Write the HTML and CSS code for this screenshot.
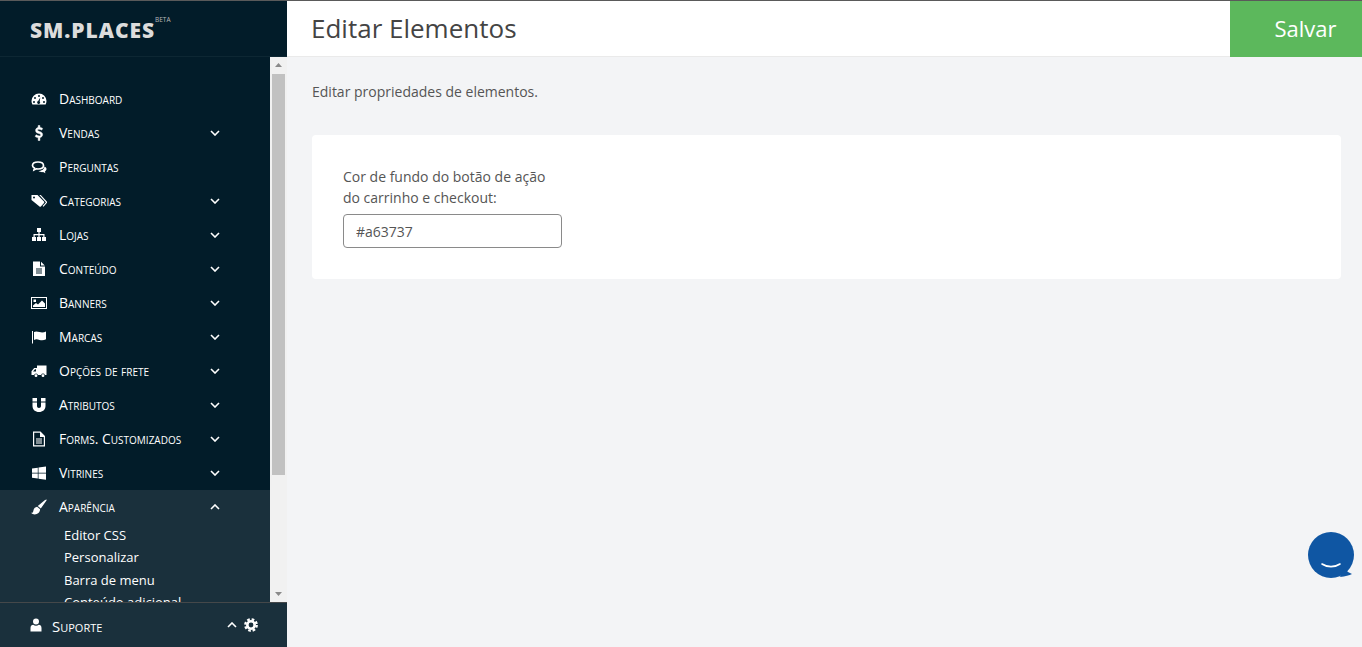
FILE: index.html
```html
<!DOCTYPE html>
<html lang="pt-BR">
<head>
<meta charset="utf-8">
<title>Editar Elementos</title>
<link rel="stylesheet" href="styles.css">
</head>
<body>
<div class="app">
  <aside class="sidebar">
    <div class="brand"><span class="logo">SM.PLACES</span><sup class="beta">BETA</sup></div>
    <div class="nav-wrap">
      <nav class="nav">
        <div class="item"><svg class="ico" viewBox="0 0 16 16"><path fill-rule="evenodd" d="M8 2.500a7.500 7.500 0 0 1 7.500 7.500c0 1.300-.3 2.500-.9 3.500H1.400A7.400 7.400 0 0 1 .5 10 7.500 7.500 0 0 1 8 2.500zM8 4a1 1 0 1 0 0 2 1 1 0 0 0 0-2zM4 6a1 1 0 1 0 0 2 1 1 0 0 0 0-2zm8 0a1 1 0 1 0 0 2 1 1 0 0 0 0-2zM3 10a1 1 0 1 0 0 2 1 1 0 0 0 0-2zm10 0a1 1 0 1 0 0 2 1 1 0 0 0 0-2zM9.300 6.500 7.200 10a1.500 1.500 0 1 0 1.500.4z"/></svg><span class="lbl">Dashboard</span></div>
        <div class="item"><svg class="ico ico-bold" viewBox="0 0 16 16"><path d="M7.200 .5h1.700V2.500c1 .1 2 .4 2.700.9l-.8 1.700c-1-.6-2-.9-2.900-.9-.9 0-1.400.3-1.400.9 0 .5.500.8 1.900 1.300 2 .6 3.200 1.400 3.200 3.200 0 1.600-1.100 2.700-2.700 3v2.900H7.200v-2.900c-1.200-.1-2.300-.5-3-1.100l.9-1.700c1 .7 2 1.100 3 1.100s1.600-.4 1.600-1c0-.6-.5-.9-2-1.400C5.700 7.900 4.600 7.100 4.600 5.400c0-1.500 1-2.600 2.600-2.900z"/></svg><span class="lbl">Vendas</span><svg class="chev" viewBox="0 0 10 6"><path d="M1 1l4 4 4-4"/></svg></div>
        <div class="item"><svg class="ico" viewBox="0 0 16 16"><path fill="none" stroke="#fff" stroke-width="1.700" d="M7 3c3.200 0 5.500 1.500 5.500 3.500S10.200 10 7 10c-.6 0-1.200 0-1.800-.2L3 11l.4-2C2.200 8.400 1.500 7.500 1.500 6.500 1.500 4.500 3.800 3 7 3z"/><path d="M13.500 7.500c1.200.6 2 1.500 2 2.500 0 1-.6 1.800-1.600 2.400l.5 1.900-2.300-1.200c-1.700.2-3.500-.2-4.600-1.100 2.800 0 5.600-1.500 6-4.500z"/></svg><span class="lbl">Perguntas</span></div>
        <div class="item"><svg class="ico" viewBox="0 0 16 16"><path fill-rule="evenodd" d="M.5 2h6L13 8.500a1 1 0 0 1 0 1.400L9.900 13.500a1 1 0 0 1-1.400 0L.5 7zM3 3.500a1 1 0 1 0 0 2 1 1 0 0 0 0-2z"/><path d="M8.300 2h1.500l6 6.500a1 1 0 0 1 0 1.400L12.500 13.700l-.9-.7 3-3.200a.6.600 0 0 0 0-.8z"/></svg><span class="lbl">Categorias</span><svg class="chev" viewBox="0 0 10 6"><path d="M1 1l4 4 4-4"/></svg></div>
        <div class="item"><svg class="ico" viewBox="0 0 16 16"><path d="M6 1h4v4H8.600v2H13.500v3H15v4h-4v-4h1.300V8.200H8.600V10H10v4H6v-4h1.400V8.200H3.700V10H5v4H1v-4h1.500V7h4.900V5H6z"/></svg><span class="lbl">Lojas</span><svg class="chev" viewBox="0 0 10 6"><path d="M1 1l4 4 4-4"/></svg></div>
        <div class="item"><svg class="ico" viewBox="0 0 16 16"><path fill-rule="evenodd" d="M2 .5h7V5.500h5V15H2zM10 .7l3.800 3.800H10zM5 7.500v1h6v-1zm0 2v1h6v-1zm0 2v1h6v-1z"/></svg><span class="lbl">Conteúdo</span><svg class="chev" viewBox="0 0 10 6"><path d="M1 1l4 4 4-4"/></svg></div>
        <div class="item"><svg class="ico" viewBox="0 0 16 16"><path fill-rule="evenodd" d="M0 2h16v12H0zm1 1v10h14V3zm1.500 1.500h2.500v2.500H2.500zM2 12V10.500L5 8l2 1.500L11 5.500l3 3V12z"/></svg><span class="lbl">Banners</span><svg class="chev" viewBox="0 0 10 6"><path d="M1 1l4 4 4-4"/></svg></div>
        <div class="item"><svg class="ico" viewBox="0 0 16 16"><path d="M1 2h1v12.500H1z"/><path d="M3 3c2-1 3.500-.5 5.500.1 2.500.7 4.500.4 6.500-.6v7.800c-2 1-4 1.300-6.500.6-2-.6-3.500-1-5.500 0z"/></svg><span class="lbl">Marcas</span><svg class="chev" viewBox="0 0 10 6"><path d="M1 1l4 4 4-4"/></svg></div>
        <div class="item"><svg class="ico" viewBox="0 0 16 16"><path fill-rule="evenodd" d="M15.500 2.500V12h-1.600a2 2 0 0 0-3.800 0H7a2 2 0 0 0-3.900 0H.5V8.300L3.200 5H6V2.500zM4 6.300 2 8.500h3V6.300z"/><circle cx="5" cy="12.700" r="1.400"/><circle cx="12" cy="12.700" r="1.400"/></svg><span class="lbl">Opções de frete</span><svg class="chev" viewBox="0 0 10 6"><path d="M1 1l4 4 4-4"/></svg></div>
        <div class="item"><svg class="ico" viewBox="0 0 16 16"><path d="M1.500 1h4.500v3.500H1.500zM10 1h4.500v3.500H10zM1.500 5.500H6V9c0 1.300.8 2 2 2s2-.7 2-2V5.500h4.500V9c0 3.700-2.800 6-6.500 6S1.500 12.700 1.500 9z"/></svg><span class="lbl">Atributos</span><svg class="chev" viewBox="0 0 10 6"><path d="M1 1l4 4 4-4"/></svg></div>
        <div class="item"><svg class="ico" viewBox="0 0 16 16"><path fill-rule="evenodd" d="M2 .5h7.500L14 5v10.500H2zm1.200 1.200v12.600h9.600V6H9V1.700zM5 7.500h6v1H5zm0 2h6v1H5zm0 2h6v1H5z"/></svg><span class="lbl">Forms. Customizados</span><svg class="chev" viewBox="0 0 10 6"><path d="M1 1l4 4 4-4"/></svg></div>
        <div class="item"><svg class="ico" viewBox="0 0 16 16"><path d="M1 3.500l5.800-.8v5H1zM7.500 2.500l7.500-1v6.200H7.500zM1 8.500h5.800v5L1 12.700zM7.500 8.500H15v6.200l-7.500-1z"/></svg><span class="lbl">Vitrines</span><svg class="chev" viewBox="0 0 10 6"><path d="M1 1l4 4 4-4"/></svg></div>
        <div class="group">
          <div class="item"><svg class="ico" viewBox="0 0 16 16"><path d="M15.500.5c.4.400-.1 1.300-.9 2.300L9.800 9.500 6.800 7l5.700-4.800C14 1 15.100.1 15.500.5z"/><path d="M6.100 7.800l3 2.500c0 3-2.500 5.200-5.400 5.200-1.400 0-2.700-.5-3.600-1.700 1.700 0 2-.7 2.200-1.900.3-2 1.700-3.800 3.800-4.100z"/></svg><span class="lbl">Aparência</span><svg class="chev" viewBox="0 0 10 6"><path d="M1 5l4-4 4 4"/></svg></div>
          <div class="sub">Editor CSS</div>
          <div class="sub">Personalizar</div>
          <div class="sub">Barra de menu</div>
          <div class="sub">Conteúdo adicional</div>
        </div>
      </nav>
      <div class="scrollbar">
        <svg class="arrow" viewBox="0 0 17 17"><path d="M5 10l3.500-4 3.500 4z"/></svg>
        <div class="track"><div class="thumb"></div></div>
        <svg class="arrow" viewBox="0 0 17 17"><path d="M5 7l3.500 4 3.500-4z"/></svg>
      </div>
    </div>
    <div class="support">
      <svg class="user" viewBox="0 0 12 14"><circle cx="6" cy="3.500" r="3"/><path d="M.5 13.500V10c0-2 1.300-3.200 2.700-3.200.8.600 1.700.9 2.800.9s2-.3 2.800-.9c1.400 0 2.700 1.200 2.700 3.200v3.500z"/></svg>
      <span class="sup-lbl">Suporte</span>
      <svg class="chev sup-chev" viewBox="0 0 10 6"><path d="M1 5l4-4 4 4"/></svg>
      <svg class="gear" viewBox="0 0 14 14"><circle cx="7" cy="7" r="3.700" fill="none" stroke="#fff" stroke-width="2.600"/><circle cx="7" cy="7" r="5.700" fill="none" stroke="#fff" stroke-width="2.400" stroke-dasharray="2.600 1.870"/></svg>
    </div>
  </aside>
  <main class="main">
    <header class="topbar">
      <h1 class="title">Editar Elementos</h1>
      <button class="save" type="button">Salvar</button>
    </header>
    <div class="content">
      <p class="desc">Editar propriedades de elementos.</p>
      <section class="card">
        <label class="field">
          <span class="field-label">Cor de fundo do botão de ação do carrinho e checkout:</span>
          <input class="input" type="text" value="#a63737">
        </label>
      </section>
    </div>
  </main>
</div>
<div class="chat">
  <svg viewBox="0 0 46 46" width="46" height="46"><circle cx="23" cy="23" r="23" fill="#0f56a3"/><path d="M36 36q3 4 8 6-4 2-12 3z" fill="#0f56a3"/><path d="M14 32c5 3.500 13 3.500 18 0" fill="none" stroke="#fff" stroke-width="1.600" stroke-linecap="round"/></svg>
</div>
</body>
</html>
```
FILE: styles.css
```css
* { box-sizing: border-box; }
html, body { height: 100%; }
body {
  margin: 0;
  overflow: hidden;
  font-family: "Open Sans", sans-serif;
  background: #f3f4f6;
  color: #555;
}
.app {
  display: flex;
  height: 647px;
  border-top: 1px solid #5a5a5a;
}
.sidebar {
  width: 287px;
  flex: none;
  display: flex;
  flex-direction: column;
  background: #021c29;
  color: #fff;
}
.brand {
  height: 56px;
  flex: none;
  padding: 17px 0 0 30px;
  display: flex;
  align-items: flex-start;
  border-bottom: 1px solid #0d2733;
}
.logo {
  font-size: 21px;
  line-height: 24px;
  font-weight: 800;
  letter-spacing: 0.95px;
  color: #dcdcdc;
}
.beta {
  font-size: 6.500px;
  line-height: 6px;
  margin: -1px 0 0 0;
  color: #b8b8b8;
}
.nav-wrap {
  flex: 1;
  min-height: 0;
  display: flex;
}
.nav {
  flex: 1;
  min-width: 0;
  overflow: hidden;
  padding-top: 25px;
}
.item {
  height: 34px;
  display: flex;
  align-items: center;
  padding-left: 31px;
  font-size: 14px;
  font-variant: small-caps;
}
.ico {
  width: 16px;
  height: 16px;
  flex: none;
  fill: #fff;
}
.ico-bold {
  stroke: #fff;
  stroke-width: 0.5;
}
.lbl {
  margin: 0 0 2px 12px;
  flex: 1;
  white-space: nowrap;
}
.chev {
  width: 10px;
  height: 6px;
  flex: none;
  margin-right: 50px;
  fill: none;
  stroke: #fff;
  stroke-width: 1.600;
}
.group {
  background: #1a303c;
  padding-bottom: 20px;
}
.sub {
  font-size: 13px;
  line-height: 22.400px;
  padding-left: 64px;
}
.scrollbar {
  width: 17px;
  flex: none;
  display: flex;
  flex-direction: column;
  background: #f1f1f1;
}
.arrow {
  width: 17px;
  height: 17px;
  flex: none;
  fill: #8a8a8a;
}
.track {
  flex: 1;
  min-height: 0;
}
.thumb {
  height: 401px;
  margin: 0 2px;
  background: #c1c1c1;
}
.support {
  height: 45px;
  flex: none;
  display: flex;
  align-items: center;
  padding-left: 30px;
  background: #1a303c;
  border-top: 1px solid #45484a;
  font-size: 15px;
  font-variant: small-caps;
}
.user {
  width: 12px;
  height: 14px;
  fill: #fff;
  flex: none;
}
.sup-lbl {
  margin: 2px 0 0 10px;
  flex: 1;
}
.sup-chev {
  margin-right: 7px;
}
.gear {
  width: 14px;
  height: 14px;
  flex: none;
  margin-right: 29px;
}
.main {
  flex: 1;
  min-width: 0;
  display: flex;
  flex-direction: column;
}
.topbar {
  height: 56px;
  flex: none;
  display: flex;
  align-items: stretch;
  background: #fff;
  border-bottom: 1px solid #eaeaea;
}
.title {
  flex: 1;
  margin: 0;
  padding-left: 24px;
  font-size: 26px;
  font-weight: 400;
  line-height: 55px;
  color: #444;
}
.save {
  width: 132px;
  border: 0;
  margin-bottom: -1px;
  padding: 0 0 2px 19px;
  background: #5cb85c;
  color: #fff;
  font: 400 22px "Open Sans", sans-serif;
}
.content {
  padding: 0 21px 0 25px;
}
.desc {
  margin: 24px 0 33px;
  font-size: 14px;
  line-height: 21px;
  color: #555;
}
.card {
  height: 144px;
  padding: 31px 31px;
  background: #fff;
  border-radius: 4px;
}
.field {
  display: block;
  width: 219px;
}
.field-label {
  display: block;
  font-size: 14px;
  line-height: 21px;
  margin-bottom: 6px;
  color: #555;
}
.input {
  display: block;
  width: 219px;
  height: 34px;
  padding: 0 12px;
  border: 1px solid #8a8a8a;
  border-radius: 4px;
  font: 400 14px "Open Sans", sans-serif;
  color: #555;
  background: #fff;
}
.chat {
  position: absolute;
  left: 1308px;
  top: 532px;
  width: 46px;
  height: 46px;
}
.chat svg { display: block; }
```
